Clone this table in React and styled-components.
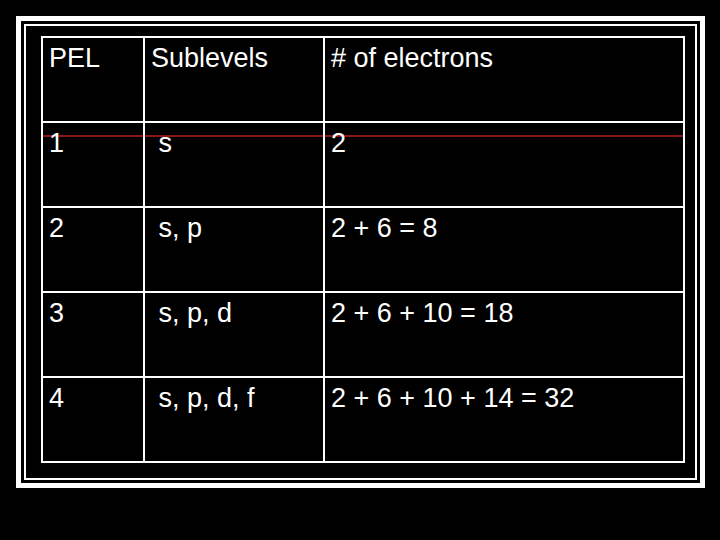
import styled, { createGlobalStyle } from "styled-components";

const GlobalStyle = createGlobalStyle`
  * { box-sizing: border-box; }
  html, body { margin: 0; padding: 0; background: #000; }
`;

const Page = styled.div`
  min-height: 540px;
  padding: 16px;
  background: #000;
  font-family: "Liberation Sans", Arial, sans-serif;
`;

const Frame = styled.div`
  width: 689px;
  border: 5px solid #fff;
  padding: 3px;
`;

const InnerFrame = styled.div`
  border: 2px solid #fff;
  padding: 10px 10px 15px 15px;
`;

const Grid = styled.div`
  display: grid;
  grid-template-columns: 100px 178px 358px;
  grid-auto-rows: 83px;
  gap: 2px;
  width: fit-content;
  border: 2px solid #fff;
  background: #fff;
`;

const Cell = styled.div`
  padding: 5px 6px 0;
  color: #fff;
  font-size: 27px;
  line-height: 31px;
  white-space: pre;
  background: ${({ $marked }) =>
    $marked
      ? "linear-gradient(to bottom, #000 12px, #8a1616 12px, #8a1616 14px, #000 14px)"
      : "#000"};
`;

const HEADERS = ["PEL", "Sublevels", "# of electrons"];

const ROWS = [
  ["1", " s", "2"],
  ["2", " s, p", "2 + 6 = 8"],
  ["3", " s, p, d", "2 + 6 + 10 = 18"],
  ["4", " s, p, d, f", "2 + 6 + 10 + 14 = 32"],
];

export default function App() {
  return (
    <Page>
      <GlobalStyle />
      <Frame>
        <InnerFrame>
          <Grid role="table">
            {HEADERS.map((h) => (
              <Cell role="columnheader" key={h}>{h}</Cell>
            ))}
            {ROWS.map((row, i) =>
              row.map((value, j) => (
                <Cell role="cell" key={i + "-" + j} $marked={i === 0}>
                  {value}
                </Cell>
              ))
            )}
          </Grid>
        </InnerFrame>
      </Frame>
    </Page>
  );
}
